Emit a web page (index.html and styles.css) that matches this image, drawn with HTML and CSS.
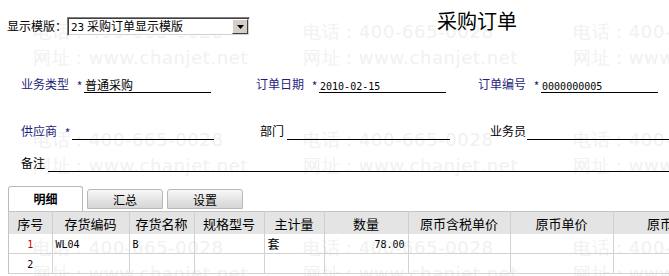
FILE: index.html
```html
<!DOCTYPE html>
<html lang="zh">
<head>
<meta charset="utf-8">
<title>采购订单</title>
<link rel="stylesheet" href="styles.css">
</head>
<body>
<div class="wm" aria-hidden="true">
  <div class="wm-cell"><div>电话：400-665-0028</div><div>网址：www.chanjet.net</div></div>
  <div class="wm-cell"><div>电话：400-665-0028</div><div>网址：www.chanjet.net</div></div>
  <div class="wm-cell"><div>电话：400-665-0028</div><div>网址：www.chanjet.net</div></div>
  <div class="wm-cell"><div>电话：400-665-0028</div><div>网址：www.chanjet.net</div></div>
  <div class="wm-cell"><div>电话：400-665-0028</div><div>网址：www.chanjet.net</div></div>
  <div class="wm-cell"><div>电话：400-665-0028</div><div>网址：www.chanjet.net</div></div>
  <div class="wm-cell"><div>电话：400-665-0028</div><div>网址：www.chanjet.net</div></div>
  <div class="wm-cell"><div>电话：400-665-0028</div><div>网址：www.chanjet.net</div></div>
  <div class="wm-cell"><div>电话：400-665-0028</div><div>网址：www.chanjet.net</div></div>
</div>
<div class="page">
  <div class="top">
    <span class="tpl-label">显示模版：</span>
    <div class="select">
      <span class="sel-text"><span class="num sel-num">23</span> 采购订单显示模版</span>
      <span class="sel-btn"><svg width="7" height="4" viewBox="0 0 7 4"><path d="M0 0H7L3.5 4Z" fill="#000"/></svg></span>
    </div>
    <h1 class="title">采购订单</h1>
  </div>

  <div class="row row1">
    <div class="field"><span class="lbl blue">业务类型</span><span class="req">*</span><span class="val w127">普通采购</span></div>
    <div class="field gap45"><span class="lbl blue">订单日期</span><span class="req">*</span><span class="val w127"><span class="num">2010-02-15</span></span></div>
    <div class="field gap32"><span class="lbl blue">订单编号</span><span class="req">*</span><span class="val w117"><span class="num">0000000005</span></span></div>
  </div>

  <div class="row row2">
    <div class="field"><span class="lbl blue">供应商</span><span class="req">*</span><span class="val w142"></span></div>
    <div class="field gap46"><span class="lbl">部门</span><span class="val w163 pad3"></span></div>
    <div class="field gap40 grow"><span class="lbl">业务员</span><span class="val grow pad1"></span></div>
  </div>

  <div class="row row3">
    <div class="field grow"><span class="lbl">备注</span><span class="val grow pad3"></span></div>
  </div>

  <div class="tabs">
    <div class="tab active">明细</div>
    <div class="tab">汇总</div>
    <div class="tab">设置</div>
  </div>

  <div class="grid-wrap">
    <table class="grid">
      <colgroup>
        <col class="c1"><col class="c2"><col class="c3"><col class="c4"><col class="c5"><col class="c6"><col class="c7"><col class="c8"><col class="c9">
      </colgroup>
      <thead>
        <tr><th>序号</th><th>存货编码</th><th>存货名称</th><th>规格型号</th><th>主计量</th><th>数量</th><th>原币含税单价</th><th>原币单价</th><th>原币金额</th></tr>
      </thead>
      <tbody>
        <tr><td class="idx red"><span class="num">1</span></td><td><span class="num">WL04</span></td><td><span class="num">B</span></td><td></td><td>套</td><td class="right"><span class="num">78.00</span></td><td></td><td></td><td></td></tr>
        <tr><td class="idx"><span class="num">2</span></td><td></td><td></td><td></td><td></td><td></td><td></td><td></td><td></td></tr>
      </tbody>
    </table>
  </div>
</div>
</body>
</html>
```

FILE: styles.css
```css
html { background: #fff; }
body {
  margin: 0;
  width: 669px;
  height: 276px;
  overflow: hidden;
  position: relative;
  font-family: "Noto Sans CJK SC", "Noto Sans", sans-serif;
  font-size: 12px;
  color: #000;
}

.num {
  font-family: "DejaVu Sans Mono", "Liberation Mono", monospace;
  font-size: 10px;
}
.sel-num { font-size: 11px; }

/* watermark overlay */
.wm {
  position: absolute;
  left: 33px;
  top: 19px;
  z-index: 0;
  display: grid;
  grid-template-columns: repeat(3, 270px);
  grid-auto-rows: 108px;
  font-family: "DejaVu Sans", sans-serif;
  font-size: 18px;
  line-height: 26px;
  color: #f1f1f1;
  letter-spacing: 0.6px;
  white-space: nowrap;
  pointer-events: none;
}

.page { position: relative; z-index: 1; }

.top {
  display: flex;
  align-items: flex-start;
  height: 73px;
  padding-left: 7px;
}
.tpl-label {
  margin-top: 18px;
  line-height: 16px;
  width: 60px;
}
.select {
  margin-top: 17px;
  width: 183px;
  height: 19px;
  box-sizing: border-box;
  display: flex;
  align-items: center;
  justify-content: space-between;
  background: #fff;
  border: 1px solid;
  border-color: #808080 #fff #fff #808080;
  box-shadow: inset 1px 1px 0 #404040, inset -1px -1px 0 #d4d0c8;
  padding: 0 1px 0 3px;
}
.sel-text { line-height: 15px; white-space: nowrap; }
.sel-btn {
  width: 16px;
  height: 15px;
  box-sizing: border-box;
  background: #d4d0c8;
  border: 1px solid;
  border-color: #fff #404040 #404040 #fff;
  display: flex;
  align-items: center;
  justify-content: center;
}
.title {
  margin: 9px 0 0 187px;
  font-size: 20px;
  font-weight: normal;
  line-height: 24px;
}

.row {
  display: flex;
  padding-left: 21px;
  height: 20px;
}
.row2 { margin-top: 27px; }
.row3 { margin-top: 12px; }

.field { display: flex; align-items: flex-end; height: 20px; }
.grow { flex: 1; }
.gap45 { margin-left: 45px; }
.gap32 { margin-left: 32px; }
.gap46 { margin-left: 46px; }
.gap40 { margin-left: 40px; }

.lbl { line-height: 14px; padding-bottom: 2px; white-space: nowrap; }
.blue { color: #1f1f7a; }
.req {
  width: 15px;
  box-sizing: border-box;
  padding-left: 6px;
  text-align: center;
  color: #1f1f7a;
  line-height: 14px;
  padding-bottom: 0;
}
.val {
  height: 20px;
  box-sizing: border-box;
  border-bottom: 1px solid #000;
  line-height: 14px;
  padding: 5px 0 0 1px;
  white-space: nowrap;
}
.w127 { width: 127px; }
.w117 { width: 117px; }
.w142 { width: 142px; }
.w163 { width: 163px; }
.pad3 { margin-left: 3px; }
.pad1 { margin-left: 1px; }

.tabs {
  display: flex;
  align-items: flex-end;
  margin-top: 14px;
  padding-left: 8px;
  height: 25px;
}
.tab {
  width: 76px;
  height: 20px;
  box-sizing: border-box;
  margin: 0 0 2px 4px;
  border: 1px solid #b8b8b8;
  border-radius: 3px 3px 0 0;
  background: linear-gradient(#f8f8f8, #e2e2e2 60%, #d6d6d6);
  text-align: center;
  line-height: 19px;
}
.tab.active {
  width: 75px;
  height: 25px;
  margin: 0;
  border-bottom: none;
  background: #fff;
  font-weight: bold;
  line-height: 24px;
}

.grid-wrap {
  margin-left: 8px;
  overflow: hidden;
  border-left: 1px solid #c4c4c4;
}
.grid {
  border-collapse: collapse;
  table-layout: fixed;
  width: 724px;
}
.c1 { width: 43px; }
.c2 { width: 77px; }
.c3 { width: 65px; }
.c4 { width: 70px; }
.c5 { width: 60px; }
.c6 { width: 84px; }
.c7 { width: 102px; }
.c8 { width: 103px; }
.c9 { width: 120px; }

.grid th {
  height: 22px;
  padding: 0;
  background: #e4e4e4;
  border-top: 1px solid #c4c4c4;
  border-right: 1px solid #cfcfcf;
  font-weight: normal;
  font-size: 13px;
  text-align: center;
  white-space: nowrap;
  overflow: hidden;
}
.grid td {
  height: 19px;
  padding: 0 3px;
  border-right: 1px solid #d2d2d2;
  border-bottom: 1px solid #d2d2d2;
  white-space: nowrap;
  overflow: hidden;
  line-height: 16px;
}
.grid td.idx { text-align: center; }
.grid td.right { text-align: right; }
.red { color: #d00000; }
```
